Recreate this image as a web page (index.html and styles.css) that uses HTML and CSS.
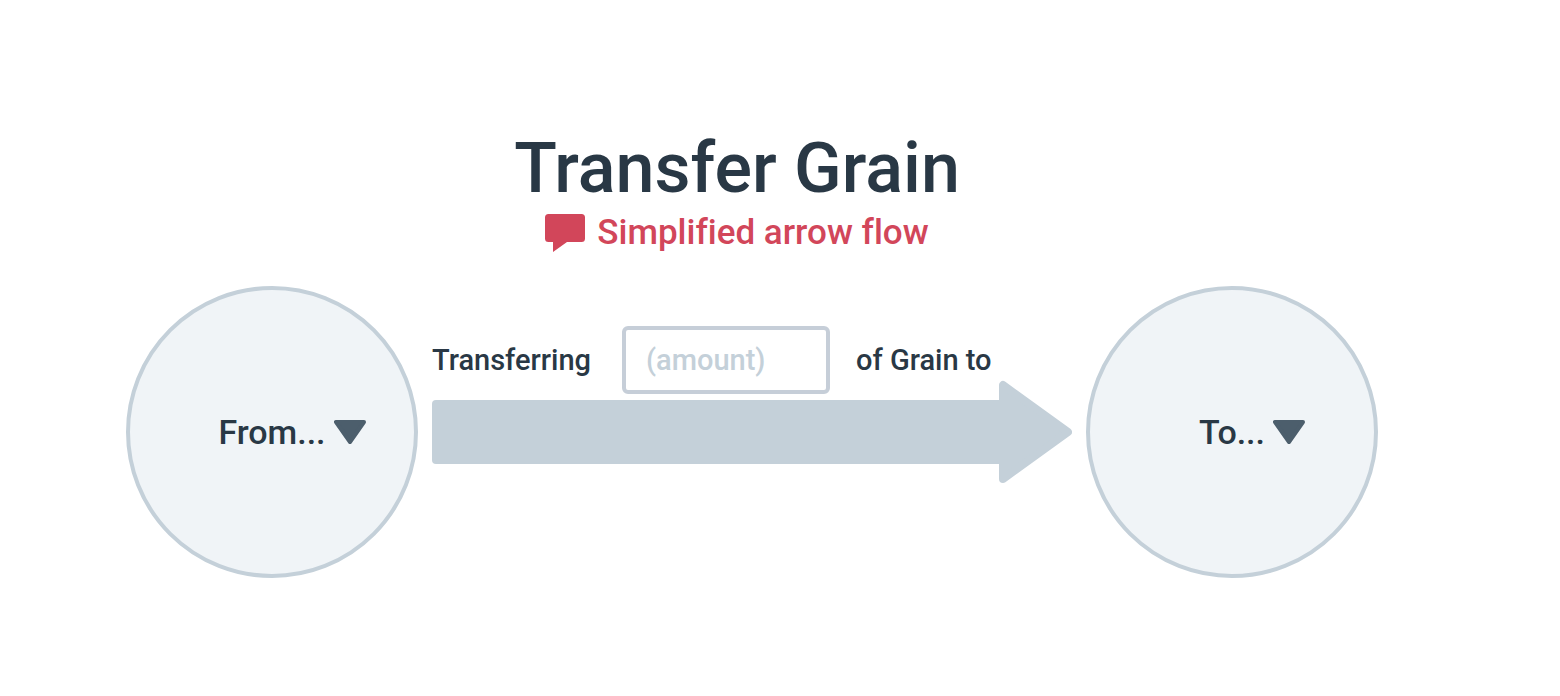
FILE: index.html
```html
<!DOCTYPE html>
<html lang="en">
<head>
<meta charset="utf-8">
<title>Transfer Grain</title>
<link rel="stylesheet" href="styles.css">
</head>
<body>
<main class="page">
  <header class="heading">
    <h1 class="title">Transfer Grain</h1>
    <p class="note">
      <svg class="note-icon" viewBox="0 0 40 40" aria-hidden="true"><path d="M3.500 1h33A3.500 3.500 0 0 1 40 4.500v21a3.500 3.500 0 0 1-3.500 3.500H22L8 39V29H3.500A3.500 3.500 0 0 1 0 25.500v-21A3.500 3.500 0 0 1 3.500 1z"/></svg>
      <span>Simplified arrow flow</span>
    </p>
  </header>
  <form class="flow">
    <label class="node">
      <select class="node-select" aria-label="Transfer from"><option>From...</option></select>
      <svg class="caret" viewBox="0 0 32 24" aria-hidden="true"><path d="M2 2h28L16 22z"/></svg>
    </label>
    <div class="transfer">
      <div class="sentence">
        <label for="amount">Transferring</label>
        <input class="amount" id="amount" type="text" placeholder="(amount)">
        <span class="unit">of Grain to</span>
      </div>
      <div class="arrow">
        <div class="arrow-shaft"></div>
        <svg class="arrow-head" viewBox="0 0 73 104" aria-hidden="true"><path d="M4 5v94L69 52z"/></svg>
      </div>
    </div>
    <label class="node">
      <select class="node-select" aria-label="Transfer to"><option>To...</option></select>
      <svg class="caret" viewBox="0 0 32 24" aria-hidden="true"><path d="M2 2h28L16 22z"/></svg>
    </label>
  </form>
</main>
</body>
</html>
```
FILE: styles.css
```css
* { box-sizing: border-box; }

body {
  margin: 0;
  background: #fff;
  color: #293845;
  font-family: Roboto, "Liberation Sans", sans-serif;
  font-weight: 500;
  font-variant-ligatures: none;
}

.page { padding: 124px 182px 64px 126px; }

.heading {
  display: flex;
  flex-direction: column;
  align-items: center;
  padding-right: 30px;
}

.title {
  margin: 0;
  font-size: 70px;
  font-weight: 500;
  line-height: 88px;
}

.note {
  display: flex;
  align-items: center;
  gap: 12px;
  margin: 0 0 32px;
  color: #d2465a;
  font-size: 35px;
  line-height: 42px;
}

.note-icon { width: 40px; height: 40px; fill: currentColor; }

.flow {
  display: grid;
  grid-template-columns: 292px 1fr 292px;
  gap: 14px;
}

.node {
  display: flex;
  align-items: center;
  justify-content: center;
  gap: 8px;
  aspect-ratio: 1;
  padding-left: 40px;
  border: 4px solid #c4d0d9;
  border-radius: 50%;
  background: #f0f4f7;
}

.node-select {
  appearance: none;
  field-sizing: content;
  padding: 0;
  border: 0;
  background: transparent;
  color: inherit;
  font: inherit;
  font-size: 34px;
  line-height: 42px;
}

.caret {
  width: 32px;
  height: 24px;
  fill: #4c5e6c;
  stroke: #4c5e6c;
  stroke-width: 4;
  stroke-linejoin: round;
}

.transfer { padding-top: 40px; }

.sentence {
  display: grid;
  grid-template-columns: 190px 208px 1fr;
  align-items: center;
  font-size: 29px;
  line-height: 36px;
}

.amount {
  width: 100%;
  height: 68px;
  padding: 0 20px;
  border: 4px solid #c6ced8;
  border-radius: 6px;
  background: #fff;
  color: inherit;
  font: inherit;
}

.amount::placeholder { color: #c4d0d9; opacity: 1; }

.unit { padding-left: 26px; }

.arrow {
  display: flex;
  align-items: center;
  margin-top: -14px;
}

.arrow-shaft {
  flex: 1;
  height: 64px;
  border-radius: 4px 0 0 4px;
  background: #c4d0d9;
}

.arrow-head {
  width: 73px;
  height: 104px;
  fill: #c4d0d9;
  stroke: #c4d0d9;
  stroke-width: 8;
  stroke-linejoin: round;
}
```
